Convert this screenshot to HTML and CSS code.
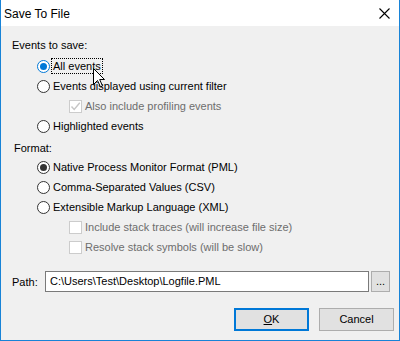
FILE: index.html
```html
<!DOCTYPE html>
<html lang="en">
<head>
    <meta charset="UTF-8">
    <title>Save To File</title>
    <link rel="stylesheet" href="styles.css">
</head>
<body>

<div class="window">
    <div class="titlebar">
        <span class="title">Save To File</span>
        <span class="close">
            <svg width="11" height="11" viewBox="0 0 11 11"><path d="M0.5 0.5 L10.5 10.5 M10.5 0.5 L0.5 10.5" stroke="#000" stroke-width="1.1" fill="none"/></svg>
        </span>
    </div>

    <div class="content">
        <div class="group-label">Events to save:</div>
        <div class="option"><span class="radio checked focus"></span><span class="text focused">All events</span></div>
        <div class="option"><span class="radio"></span><span class="text">Events displayed using current filter</span></div>
        <div class="option sub disabled">
            <span class="check">
                <svg width="11" height="11" viewBox="0 0 11 11"><path d="M1.5 5.5 L4.2 8.5 L9.8 1.8" stroke="#c6c6c6" stroke-width="1.4" fill="none"/></svg>
            </span>
            <span class="text">Also include profiling events</span>
        </div>
        <div class="option"><span class="radio"></span><span class="text">Highlighted events</span></div>

        <div class="group-label format">Format:</div>
        <div class="option"><span class="radio checked"></span><span class="text">Native Process Monitor Format (PML)</span></div>
        <div class="option"><span class="radio"></span><span class="text">Comma-Separated Values (CSV)</span></div>
        <div class="option"><span class="radio"></span><span class="text">Extensible Markup Language (XML)</span></div>
        <div class="option sub disabled"><span class="check"></span><span class="text">Include stack traces (will increase file size)</span></div>
        <div class="option sub disabled"><span class="check"></span><span class="text">Resolve stack symbols (will be slow)</span></div>

        <div class="path-row">
            <span class="path-label">Path:</span>
            <div class="path-input">C:\Users\Test\Desktop\Logfile.PML</div>
            <div class="browse">...</div>
        </div>

        <div class="buttons">
            <div class="button default"><u>O</u>K</div>
            <div class="button">Cancel</div>
        </div>
    </div>

    <!-- mouse pointer over "All events" -->
    <svg class="cursor" width="13" height="20" viewBox="0 0 13 20">
        <path d="M0.5 0.5 L0.5 16.5 L4.5 12.5 L7.5 19 L9.5 18 L6.7 11.5 L11.5 11.5 Z" fill="#fff" stroke="#000" stroke-width="1"/>
    </svg>
</div>

</body>
</html>
```

FILE: styles.css
```css
* {
    box-sizing: border-box;
}
body {
    margin: 0;
    font-family: "Liberation Sans", Arial, sans-serif;
    font-size: 11px;
    color: #000;
}
.window {
    position: relative;
    width: 400px;
    height: 341px;
    background-color: #f0f0f0;
    border: 1px solid #1883d7;
    border-top: none;
}
.titlebar {
    height: 26px;
    background-color: #fff;
    display: flex;
    align-items: center;
    justify-content: space-between;
    padding-left: 3px;
}
.title {
    font-size: 12px;
    margin-top: 1px;
}
.close {
    display: flex;
    margin-right: 9px;
    margin-top: 1px;
}
.content {
    padding: 10px 0 0 0;
}
.group-label {
    height: 18px;
    line-height: 18px;
    padding-left: 11px;
    margin-bottom: 2px;
}
.group-label.format {
    padding-left: 13px;
    margin-top: 3px;
    margin-bottom: 0;
}
.option {
    height: 20px;
    display: flex;
    align-items: center;
    padding-left: 36px;
}
.option.sub {
    padding-left: 68px;
}
.option .text {
    line-height: 14px;
    padding: 0 1px;
    margin-left: 2px;
}
.option .text.focused {
    outline: 1px dotted #000;
    outline-offset: 0;
}
.disabled .text {
    color: #6d6d6d;
}
.radio {
    width: 13px;
    height: 13px;
    border: 1px solid #333;
    border-radius: 50%;
    background-color: #fff;
    display: flex;
    align-items: center;
    justify-content: center;
}
.radio.checked::after {
    content: "";
    width: 7px;
    height: 7px;
    border-radius: 50%;
    background-color: #333;
}
.radio.focus {
    border-color: #0078d7;
}
.radio.focus::after {
    background-color: #0078d7;
}
.check {
    width: 13px;
    height: 13px;
    border: 1px solid #cccccc;
    background-color: #fff;
    display: flex;
    align-items: center;
    justify-content: center;
}
.path-row {
    display: flex;
    align-items: center;
    margin-top: 14px;
    height: 21px;
    padding-left: 11px;
}
.path-label {
    width: 33px;
}
.path-input {
    width: 324px;
    height: 21px;
    line-height: 19px;
    border: 1px solid #7a7a7a;
    background-color: #fff;
    padding-left: 4px;
}
.browse {
    width: 19px;
    height: 21px;
    margin-left: 2px;
    border: 1px solid #adadad;
    background-color: #e1e1e1;
    text-align: center;
    line-height: 19px;
    color: #000;
}
.buttons {
    display: flex;
    justify-content: flex-end;
    gap: 10px;
    margin-top: 16px;
    padding-right: 5px;
}
.button {
    width: 75px;
    height: 23px;
    line-height: 21px;
    text-align: center;
    background-color: #e1e1e1;
    border: 1px solid #adadad;
}
.button.default {
    border: 2px solid #0078d7;
    line-height: 19px;
}
.cursor {
    position: absolute;
    left: 92px;
    top: 68px;
}
```
